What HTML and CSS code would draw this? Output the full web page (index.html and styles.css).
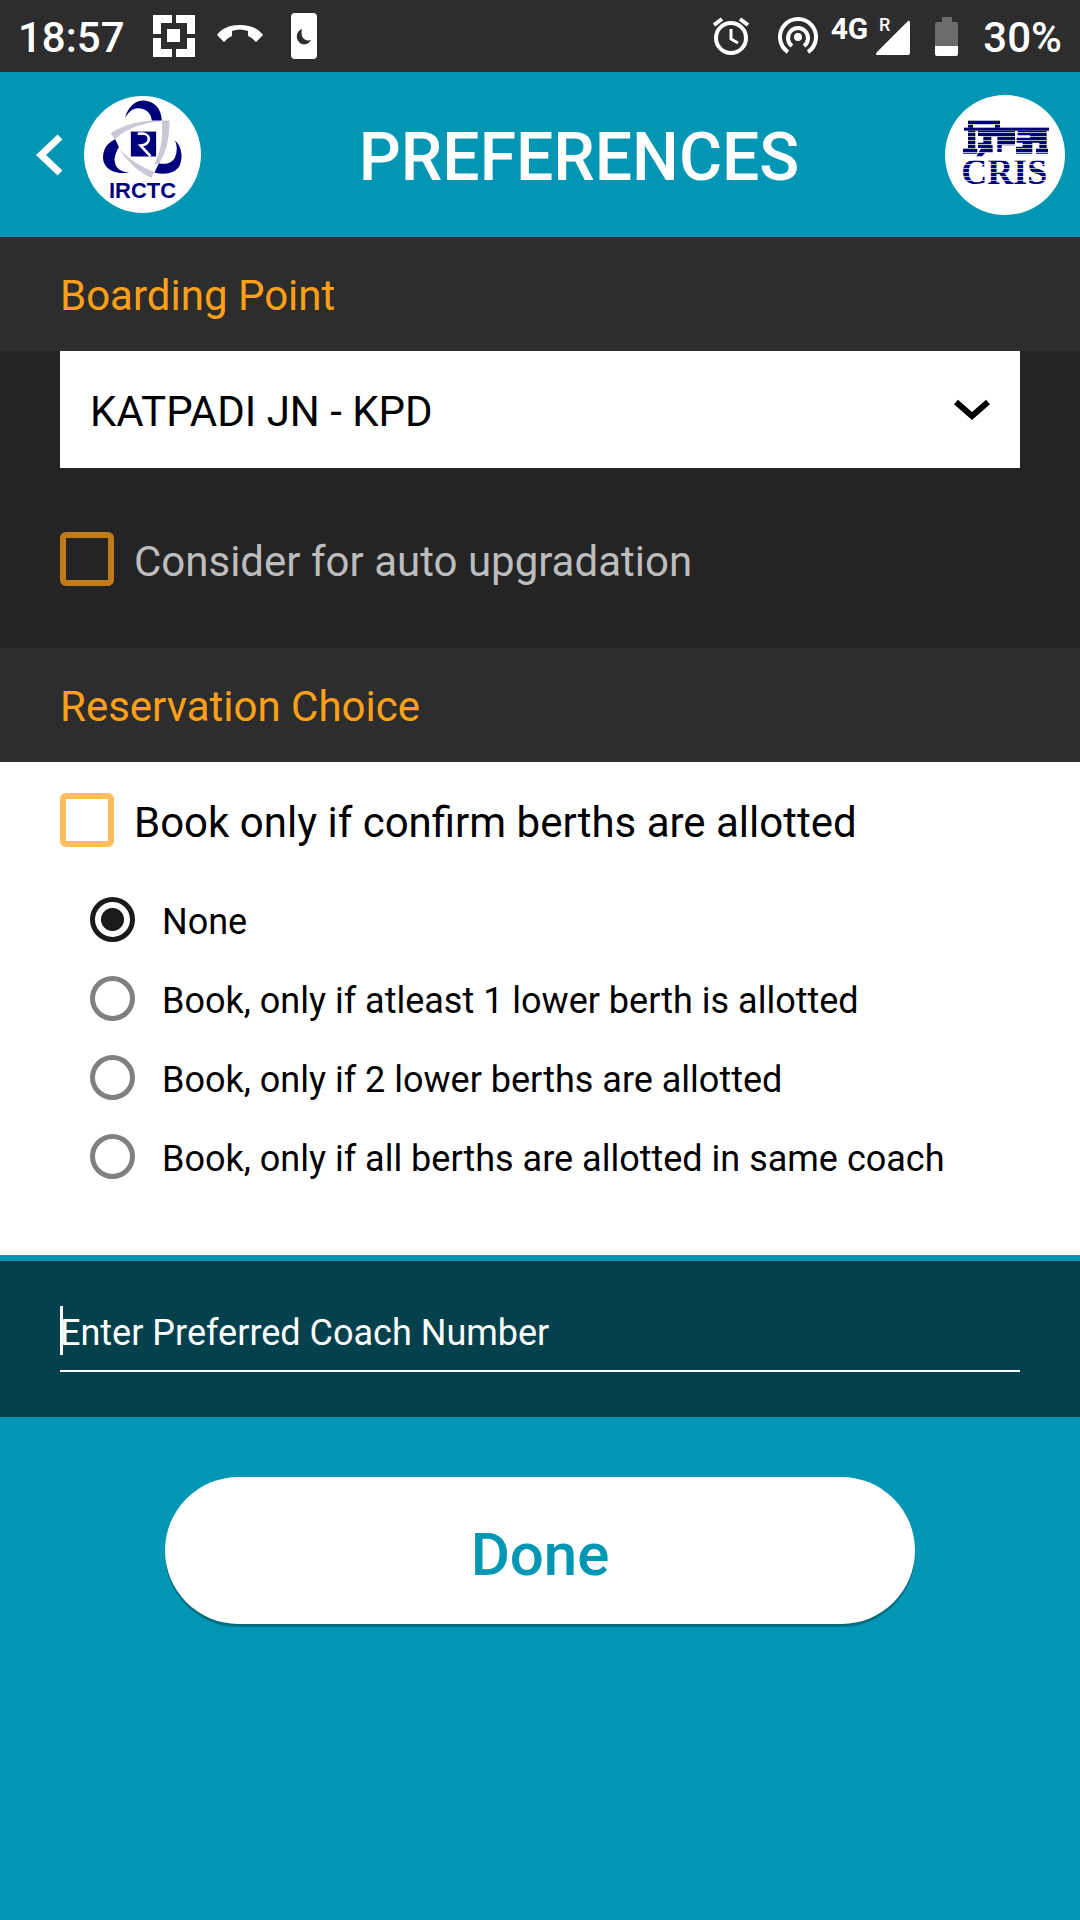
FILE: index.html
```
<!DOCTYPE html>
<html lang="en">
<head>
    <meta charset="UTF-8">
    <meta name="viewport" content="width=device-width, initial-scale=1.0">
    <title>Preferences</title>
    <link rel="stylesheet" href="styles.css">
</head>
<body>
    <!-- Status bar -->
    <div class="status-bar">
        <div class="status-left">
            <span class="status-text">18:57</span>
            <svg width="42" height="42" viewBox="0 0 42 42" fill="#fff">
                <path d="M0 0H19V8H8V19H0ZM23 0H42V19H34V8H23ZM0 23H8V34H19V42H0ZM34 23H42V42H23V34H34Z"/>
                <rect x="14" y="14" width="13" height="13"/>
            </svg>
            <svg class="phone" width="46" height="46" viewBox="0 0 46 46" fill="#fff">
                <path d="M0 22C5 15 13 12 23 12S41 15 46 22L39 29C36 26 34 24 31 23V18Q23 15 15 18V23C12 24 10 26 7 29Z"/>
            </svg>
            <svg width="26" height="46" viewBox="0 0 26 46">
                <rect width="26" height="46" rx="4" fill="#fff"/>
                <path d="M11 16C5 18 4 26 9 30C13 33 18 31 20 27C13 29 9 23 11 16Z" fill="#2d2d2d"/>
            </svg>
        </div>
        <div class="status-right">
            <svg width="40" height="38" viewBox="0 0 40 38" fill="none" stroke="#fff">
                <circle cx="18" cy="21" r="15" stroke-width="4"/>
                <path d="M1 8L9 2M35 8L27 2" stroke-width="4"/>
                <path d="M18 12V22L25 26" stroke-width="3"/>
            </svg>
            <svg width="40" height="38" viewBox="0 0 40 38" fill="none" stroke="#fff" stroke-width="4">
                <circle cx="20" cy="20" r="4" fill="#fff" stroke="none"/>
                <path d="M14 29A10 10 0 1 1 26 29"/>
                <path d="M10 35A18 18 0 1 1 30 35"/>
            </svg>
            <div class="signal">
                <span class="network">4G</span>
                <svg width="34" height="40" viewBox="0 0 34 40" fill="#fff">
                    <path d="M32 5Q34 4 34 7V37Q34 39 32 39H1Q-1 39 1 36Z"/>
                </svg>
                <span class="roaming">R</span>
            </div>
            <svg width="23" height="39" viewBox="0 0 23 39">
                <path d="M7 0H17V5H21Q23 5 23 7V29H0V7Q0 5 2 5H7Z" fill="#6c6c6c"/>
                <path d="M0 29H23V37Q23 39 21 39H2Q0 39 0 37Z" fill="#fff"/>
            </svg>
            <span class="status-text">30%</span>
        </div>
    </div>

    <!-- App header -->
    <header class="app-header">
        <button class="back" type="button" aria-label="Back">
            <svg width="28" height="42" viewBox="0 0 28 42" fill="none" stroke="#fff" stroke-width="7">
                <path d="M24 3L5 21L24 39"/>
            </svg>
        </button>
        <svg class="logo-irctc" viewBox="192 61 352 352" role="img" aria-label="IRCTC">
            <circle cx="368" cy="237" r="176" fill="#fff"/>
            <g fill="#cbc7d6">
                <path d="M272 173C315 145 365 134 420 135V138C365 143 315 162 285 191Z"/>
                <path d="M426 135H449C450 185 440 230 418 264L404 266C425 225 430 180 426 135Z"/>
                <path d="M296 217C325 262 355 290 394 308L404 289C362 275 325 250 296 217Z"/>
            </g>
            <g fill="#00007c">
                <path d="M315 128C325 90 350 72 378 75C405 78 425 100 426 135H396C394 110 375 98 355 98C338 98 325 110 315 128Z"/>
                <path d="M286 191C258 203 246 228 250 255C256 282 285 297 328 292C305 290 288 280 285 262C282 245 288 230 297 215Z"/>
                <path d="M466 194C487 215 490 245 480 270C468 293 435 300 404 291L417 264C440 268 458 262 466 245C473 228 473 212 466 194Z"/>
                <rect x="333" y="168" width="76" height="75"/>
            </g>
            <path d="M354 174H370C394 178 394 206 362 210L392 242" fill="none" stroke="#fff" stroke-width="8"/>
            <text x="368" y="369" text-anchor="middle" class="irctc-text">IRCTC</text>
        </svg>
        <h1>PREFERENCES</h1>
        <svg class="logo-cris" viewBox="75 57 360 360" role="img" aria-label="CRIS">
            <defs>
                <pattern id="lines" width="12" height="12" patternUnits="userSpaceOnUse">
                    <rect width="12" height="3" fill="#fff" fill-opacity="0.7"/>
                </pattern>
            </defs>
            <circle cx="255" cy="237" r="180" fill="#fff"/>
            <g fill="#00007c">
                <path d="M144 132H240V155H225V146H159V155H144Z"/>
                <path d="M144 164H166V216H172V233H129V216H144Z"/>
                <path d="M174 164H285V208H245V228H232V182H214V208H218V230H196L184 243H168L184 216H174V200H190V180H174Z"/>
                <path d="M293 164H380V216H384V233H348V216H358V200H337V233H288V212H308V200H290V185H330V178H293Z"/>
                <text x="253" y="324" text-anchor="middle" class="cris-text">CRIS</text>
            </g>
            <rect x="120" y="130" width="272" height="200" fill="url(#lines)"/>
            <rect x="132" y="155" width="255" height="9" fill="#00007c"/>
        </svg>
    </header>

    <main>
        <!-- Boarding point -->
        <section class="boarding">
            <h2><label for="boarding-point">Boarding Point</label></h2>
            <div class="boarding-body">
                <div class="select-box">
                    <select id="boarding-point">
                        <option>KATPADI JN - KPD</option>
                    </select>
                    <svg class="chevron" width="36" height="24" viewBox="0 0 36 24" fill="none" stroke="#000" stroke-width="6">
                        <path d="M2 4L18 18L34 4"/>
                    </svg>
                </div>
                <label class="check-row check-upgrade">
                    <input type="checkbox">
                    <span>Consider for auto upgradation</span>
                </label>
            </div>
        </section>

        <!-- Reservation choice -->
        <section class="reservation">
            <h2>Reservation Choice</h2>
            <div class="reservation-body">
                <label class="check-row">
                    <input type="checkbox">
                    <span>Book only if confirm berths are allotted</span>
                </label>
                <div class="radio-list">
                    <label><input type="radio" name="choice" checked><span>None</span></label>
                    <label><input type="radio" name="choice"><span>Book, only if atleast 1 lower berth is allotted</span></label>
                    <label><input type="radio" name="choice"><span>Book, only if 2 lower berths are allotted</span></label>
                    <label><input type="radio" name="choice"><span>Book, only if all berths are allotted in same coach</span></label>
                </div>
            </div>
        </section>

        <!-- Preferred coach -->
        <section class="coach">
            <div class="coach-field">
                <input type="text" placeholder="Enter Preferred Coach Number" aria-label="Enter Preferred Coach Number">
            </div>
        </section>

        <button class="done" type="button">Done</button>
    </main>
</body>
</html>
```
FILE: styles.css
```
* {
    margin: 0;
    padding: 0;
    box-sizing: border-box;
    font-family: Roboto, "Noto Sans", sans-serif;
}

body {
    min-height: 100vh;
    background-color: #0096b4;
    color: #000;
}

svg {
    display: block;
    flex: none;
}

/* Status bar */
.status-bar {
    display: flex;
    justify-content: space-between;
    height: 72px;
    padding: 0 18px;
    background-color: #2d2d2d;
    color: #fff;
}

.status-left,
.status-right {
    display: flex;
    align-items: center;
}

.status-left {
    gap: 28px;
}

.status-right {
    gap: 25px;
}

.status-text {
    padding-top: 3px;
    font-size: 42px;
    font-weight: 500;
    line-height: 48px;
}

.phone {
    margin-left: -6px;
}

.signal {
    display: flex;
    align-items: center;
    position: relative;
    gap: 8px;
    margin-left: -12px;
}

.network {
    font-size: 30px;
    font-weight: 700;
    line-height: 36px;
    padding-bottom: 14px;
}

.roaming {
    position: absolute;
    top: 2px;
    right: 20px;
    font-size: 18px;
    font-weight: 500;
    line-height: 24px;
}

/* App header */
.app-header {
    display: flex;
    align-items: center;
    height: 165px;
    padding: 0 15px 0 36px;
}

.back {
    width: 48px;
    border: none;
    background: none;
    cursor: pointer;
}

.app-header h1 {
    flex: 1;
    padding: 6px 0 0 12px;
    color: #fff;
    font-size: 66px;
    font-weight: 500;
    line-height: 80px;
    text-align: center;
}

.logo-irctc {
    width: 117px;
    height: 117px;
}

.logo-cris {
    width: 120px;
    height: 120px;
}

.irctc-text {
    fill: #00007c;
    font-family: "Liberation Sans", Arial, sans-serif;
    font-size: 66px;
    font-weight: 700;
}

.cris-text {
    font-family: "Liberation Serif", "Times New Roman", serif;
    font-size: 108px;
    font-weight: 700;
}

/* Section titles */
h2 {
    padding: 34px 60px 30px;
    background-color: #2d2d2d;
    color: #ffa019;
    font-size: 42px;
    font-weight: 400;
    line-height: 50px;
}

/* Boarding point */
.boarding-body {
    padding: 0 60px;
    background-color: #242424;
}

.select-box {
    position: relative;
}

.select-box select {
    display: block;
    width: 100%;
    height: 117px;
    padding: 4px 30px 0;
    border: none;
    border-radius: 0;
    appearance: none;
    background-color: #fff;
    color: #000;
    font-size: 42px;
}

.chevron {
    position: absolute;
    top: 47px;
    right: 30px;
    pointer-events: none;
}

/* Checkboxes */
.check-row {
    display: flex;
    align-items: center;
    gap: 20px;
    font-size: 42px;
    line-height: 54px;
}

.check-row input {
    flex: none;
    width: 54px;
    height: 54px;
    border: 6px solid #ffbc5c;
    border-radius: 6px;
    appearance: none;
}

.check-row input:checked {
    background-color: #ffa019;
}

.check-row span {
    padding-top: 6px;
}

.check-upgrade {
    padding: 61px 0 59px;
    color: #bdbdbd;
}

.check-upgrade input {
    border-color: #c07c1a;
}

/* Reservation choice */
.reservation-body {
    padding: 28px 60px 59px;
    background-color: #fff;
}

.radio-list {
    padding: 30px 30px 0;
}

.radio-list label {
    display: flex;
    align-items: center;
    gap: 27px;
    height: 79px;
    font-size: 36px;
    line-height: 42px;
}

.radio-list input {
    flex: none;
    width: 45px;
    height: 45px;
    border: 5px solid #808080;
    border-radius: 50%;
    appearance: none;
}

.radio-list input:checked {
    border-color: #1a1a1a;
    background: radial-gradient(circle, #1a1a1a 11px, transparent 12px);
}

.radio-list span {
    padding-top: 4px;
}

/* Preferred coach */
.coach {
    padding: 45px 60px;
    border-top: 6px solid #0096b4;
    background-color: #05414c;
}

.coach-field {
    position: relative;
    border-bottom: 2px solid #fff;
}

.coach-field::before {
    content: "";
    position: absolute;
    top: 0;
    left: 0;
    width: 3px;
    height: 49px;
    background-color: #fff;
}

.coach-field input {
    display: block;
    width: 100%;
    height: 64px;
    padding-bottom: 10px;
    border: none;
    outline: none;
    background: none;
    color: #fff;
    font-size: 36px;
}

.coach-field input::placeholder {
    color: #fff;
}

/* Done button */
.done {
    display: block;
    width: calc(100% - 330px);
    height: 147px;
    margin: 60px auto;
    padding-top: 8px;
    border: none;
    border-radius: 74px;
    background-color: #fff;
    box-shadow: 0 3px 0 #006c80;
    color: #0096b4;
    font-size: 60px;
    font-weight: 500;
    cursor: pointer;
}
```
